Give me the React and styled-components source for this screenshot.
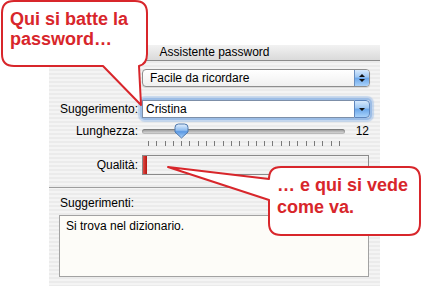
import React from "react";
import styled, { createGlobalStyle } from "styled-components";

const GlobalStyle = createGlobalStyle`
  html, body { margin: 0; padding: 0; background: #fff; }
  body { font-family: "Liberation Sans", Arial, sans-serif; }
`;

const Stage = styled.div`
  position: relative;
  width: 422px;
  height: 286px;
  overflow: hidden;
  background: #fff;
  padding: 45px 0 0 49px;
  box-sizing: border-box;
`;

const Window = styled.div`
  width: 331px;
  height: 260px;
  background: repeating-linear-gradient(to bottom, #ebebeb 0 2px, #f4f4f4 2px 4px);
  font-size: 12px;
  color: #000;
`;

const TitleBar = styled.div`
  height: 15px;
  line-height: 15px;
  text-align: center;
  background: linear-gradient(#f2f2f2, #dadada);
  border-bottom: 1px solid #8c8c8c;
`;

const FormRow = styled.div`
  display: grid;
  grid-template-columns: 89px 228px;
  column-gap: 4px;
  align-items: center;
  height: ${(p) => p.h}px;
  margin-top: ${(p) => p.mt}px;
`;

const Label = styled.div`
  text-align: right;
  white-space: nowrap;
`;

const Popup = styled.div`
  display: flex;
  height: 18px;
  border: 1px solid #8e8e8e;
  border-radius: 4px;
  background: linear-gradient(#ffffff, #f0f0f0);
  box-sizing: border-box;
  overflow: hidden;
  box-shadow: 0 1px 1px rgba(0, 0, 0, 0.12);
`;

const PopupText = styled.div`
  flex: 1;
  padding-left: 7px;
  line-height: 16px;
`;

const AquaCap = styled.div`
  width: 14px;
  display: flex;
  flex-direction: column;
  align-items: center;
  justify-content: center;
  gap: 2px;
  border-left: 1px solid #6a8fbf;
  background: linear-gradient(#d7e9fc 0%, #9cc6f3 45%, #6aa6ea 50%, #a9d2fa 100%);
`;

const Tri = styled.div`
  width: 0;
  height: 0;
  border-left: 3px solid transparent;
  border-right: 3px solid transparent;
  ${(p) => (p.up ? "border-bottom: 3px solid #111;" : "border-top: 3px solid #111;")}
`;

const ComboWrap = styled.div`
  display: flex;
  height: 18px;
  border-radius: 3px;
  box-shadow: 0 0 0 2px #9cbde6, 0 0 1px 4px rgba(140, 180, 230, 0.45);
`;

const ComboField = styled.div`
  flex: 1;
  border: 1px solid #7d8fa8;
  border-right: none;
  background: #fff;
  padding-left: 3px;
  line-height: 16px;
  box-sizing: border-box;
`;

const ComboCap = styled(AquaCap)`
  border: 1px solid #5f86bd;
  border-radius: 0 4px 4px 0;
`;

const SliderCell = styled.div`
  display: flex;
  align-items: center;
`;

const Track = styled.div`
  position: relative;
  width: 203px;
  height: 5px;
  border-radius: 3px;
  background: linear-gradient(#8a8a8a, #c4c4c4 60%, #e2e2e2);
  box-shadow: inset 0 0 0 1px rgba(0, 0, 0, 0.15);
`;

const Knob = styled.svg`
  position: absolute;
  left: 32px;
  top: -6px;
`;

const Value = styled.div`
  margin-left: auto;
  padding-right: 1px;
`;

const Ticks = styled.div`
  display: flex;
  justify-content: space-between;
  width: 192px;
  margin-left: 6px;
  height: 100%;
`;

const Tick = styled.div`
  width: 1px;
  height: 100%;
  background: #7a7a7a;
`;

const QualityBox = styled.div`
  height: 20px;
  width: 227px;
  border: 1px solid #8a8a8a;
  box-sizing: border-box;
  display: flex;
`;

const QualityFill = styled.div`
  width: ${(p) => p.w}px;
  background: linear-gradient(to right, #e04a45, #b5150f);
`;

const Separator = styled.div`
  height: 1px;
  background: #9d9d9d;
  margin-top: 12px;
`;

const SectionLabel = styled.div`
  padding-left: 11px;
  margin-top: 8px;
  line-height: 14px;
`;

const TextArea = styled.div`
  margin: 5px 0 0 10px;
  width: 310px;
  height: 62px;
  border: 1px solid #a2a2a2;
  background: #fdfcf8;
  box-sizing: border-box;
  padding: 3px 6px;
  line-height: 14px;
`;

const Overlay = styled.svg`
  position: absolute;
  left: 0;
  top: 0;
  pointer-events: none;
`;

const CalloutText = styled.div`
  position: absolute;
  left: ${(p) => p.x}px;
  top: ${(p) => p.y}px;
  color: #d8262b;
  font-weight: bold;
  font-size: 18px;
  line-height: ${(p) => p.lh}px;
  white-space: nowrap;
`;

export default function App() {
  const ticks = Array.from({ length: 24 });
  return (
    <>
      <GlobalStyle />
      <Stage>
        <Window>
          <TitleBar>Assistente password</TitleBar>
          <FormRow h={18} mt={8}>
            <span />
            <Popup>
              <PopupText>Facile da ricordare</PopupText>
              <AquaCap>
                <Tri up />
                <Tri />
              </AquaCap>
            </Popup>
          </FormRow>
          <FormRow h={18} mt={13}>
            <Label>Suggerimento:</Label>
            <ComboWrap>
              <ComboField>Cristina</ComboField>
              <ComboCap>
                <Tri />
              </ComboCap>
            </ComboWrap>
          </FormRow>
          <FormRow h={16} mt={5}>
            <Label>Lunghezza:</Label>
            <SliderCell>
              <Track>
                <Knob width="15" height="16" viewBox="0 0 15 16">
                  <defs>
                    <linearGradient id="kg" x1="0" y1="0" x2="0" y2="1">
                      <stop offset="0" stopColor="#e4f0fd" />
                      <stop offset="0.45" stopColor="#8fbdf0" />
                      <stop offset="0.55" stopColor="#5b98e2" />
                      <stop offset="1" stopColor="#a9d1fa" />
                    </linearGradient>
                  </defs>
                  <path
                    d="M1 4.5 Q1 1 4.5 1 H10.5 Q14 1 14 4.5 V9 L7.5 15 L1 9 Z"
                    fill="url(#kg)"
                    stroke="#4f78ad"
                    strokeWidth="1"
                  />
                </Knob>
              </Track>
              <Value>12</Value>
            </SliderCell>
          </FormRow>
          <FormRow h={5} mt={2}>
            <span />
            <Ticks>
              {ticks.map((_, i) => (
                <Tick key={i} />
              ))}
            </Ticks>
          </FormRow>
          <FormRow h={20} mt={9}>
            <Label>Qualità:</Label>
            <QualityBox>
              <QualityFill w={4} />
            </QualityBox>
          </FormRow>
          <Separator />
          <SectionLabel>Suggerimenti:</SectionLabel>
          <TextArea>Si trova nel dizionario.</TextArea>
        </Window>

        <Overlay width="422" height="286" viewBox="0 0 422 286">
          <path
            d="M14 1 H135 Q147 1 147 13 V54 Q147 64 139 66 L141 105 L103 66 H14 Q2 66 2 54 V13 Q2 1 14 1 Z"
            fill="#fff"
            stroke="#d8262b"
            strokeWidth="2"
            strokeLinejoin="round"
          />
          <path
            d="M281 167 H409 Q420 167 420 179 V223 Q420 235 409 235 H281 Q269 235 269 223 V200 L168 167 L269 179 Q269 167 281 167 Z"
            fill="#fff"
            stroke="#d8262b"
            strokeWidth="2"
            strokeLinejoin="round"
          />
        </Overlay>
        <CalloutText x={10} y={9} lh={20}>
          Qui si batte la
          <br />
          password…
        </CalloutText>
        <CalloutText x={277} y={174} lh={22}>
          … e qui si vede
          <br />
          come va.
        </CalloutText>
      </Stage>
    </>
  );
}
